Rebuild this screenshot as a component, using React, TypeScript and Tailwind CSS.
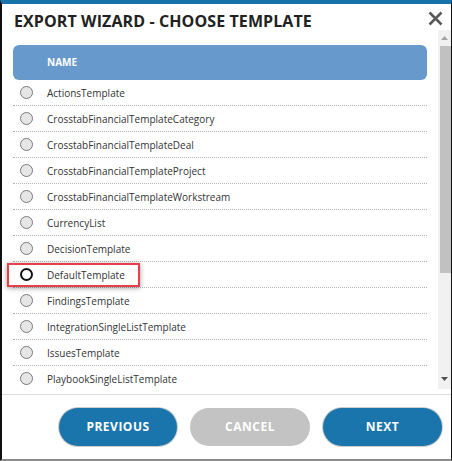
import { useState } from "react";

const templates = [
    "ActionsTemplate",
    "CrosstabFinancialTemplateCategory",
    "CrosstabFinancialTemplateDeal",
    "CrosstabFinancialTemplateProject",
    "CrosstabFinancialTemplateWorkstream",
    "CurrencyList",
    "DecisionTemplate",
    "DefaultTemplate",
    "FindingsTemplate",
    "IntegrationSingleListTemplate",
    "IssuesTemplate",
    "PlaybookSingleListTemplate",
];

export default function App() {
    const [selected, setSelected] = useState("DefaultTemplate");

    return (
        <div className="w-[452px] h-[461px] bg-white flex flex-col border-t-4 border-t-[#1873a9] border-l-2 border-l-[#111] border-r border-r-[#111] border-b-2 border-b-[#8c8c8c] font-['Open_Sans',sans-serif] overflow-hidden">
            {/* Title */}
            <div className="h-[26px] shrink-0 flex items-start justify-between pl-[12px] pr-[8px]">
                <h1 className="text-[16px] leading-[20px] pt-[7px] font-bold text-[#222] tracking-[0.1px]">
                    EXPORT WIZARD - CHOOSE TEMPLATE
                </h1>
                <button className="mt-[7px] text-[#595959]">
                    <svg width="15" height="15" viewBox="0 0 15 15">
                        <path d="M1.5 1.5 L13.5 13.5 M13.5 1.5 L1.5 13.5" stroke="currentColor" strokeWidth="2.6" />
                    </svg>
                </button>
            </div>

            {/* List + scrollbar */}
            <div className="h-[359px] shrink-0 flex">
                <div className="flex-1 overflow-hidden pl-[11px] pr-[11px] pt-[15px]">
                    <div className="h-[35px] rounded-[6px] bg-[#6799cc] flex items-center pl-[34px] text-white text-[10px] font-bold">
                        NAME
                    </div>
                    {templates.map((name) => {
                        const isSel = name === selected;
                        return (
                            <div
                                key={name}
                                onClick={() => setSelected(name)}
                                className="relative h-[26px] flex items-center border-b border-dotted border-[#b5b5b5] cursor-pointer"
                            >
                                <span
                                    className={
                                        isSel
                                            ? "ml-[7px] w-[13px] h-[13px] rounded-full border-2 border-[#111] bg-white shrink-0"
                                            : "ml-[7px] w-[13px] h-[13px] rounded-full border border-[#7a7a7a] bg-[#e6e6e6] shrink-0"
                                    }
                                />
                                <span className="ml-[14px] text-[10px] leading-[14px] pt-[1px] text-[#333]">{name}</span>
                                {isSel && (
                                    <span className="absolute left-[-6px] top-[1px] w-[133px] h-[24px] border-2 border-[#e5414b] shadow-[0_1px_5px_rgba(0,0,0,0.4)] pointer-events-none" />
                                )}
                            </div>
                        );
                    })}
                </div>

                {/* Scrollbar */}
                <div className="w-[13px] shrink-0 bg-[#f1f1f1] flex flex-col">
                    <div className="h-[16px] flex items-center justify-center">
                        <svg width="7" height="4" viewBox="0 0 7 4">
                            <polygon points="3.5,0 7,4 0,4" fill="#a3a3a3" />
                        </svg>
                    </div>
                    <div className="ml-[2px] h-[227px] bg-[#c1c1c1]" />
                    <div className="flex-1" />
                    <div className="h-[18px] flex items-start justify-center pt-[6px]">
                        <svg width="7" height="4" viewBox="0 0 7 4">
                            <polygon points="0,0 7,0 3.5,4" fill="#505050" />
                        </svg>
                    </div>
                </div>
            </div>

            <div className="h-[6px] shrink-0 border-b border-[#dedede]" />

            {/* Footer */}
            <div className="flex-1 flex items-center justify-end gap-[13px] pr-[9px]">
                <button className="w-[118px] h-[38px] rounded-full bg-[#1a75ad] text-white text-[12px] font-bold tracking-[0.5px] shadow-[0_0_0_1px_rgba(0,0,0,0.2)]">
                    PREVIOUS
                </button>
                <button className="w-[120px] h-[38px] rounded-full bg-[#c3c3c3] text-white text-[12px] font-bold tracking-[0.5px]">
                    CANCEL
                </button>
                <button className="w-[119px] h-[38px] rounded-full bg-[#1a75ad] text-white text-[12px] font-bold tracking-[0.5px] shadow-[0_0_0_1px_rgba(0,0,0,0.2)]">
                    NEXT
                </button>
            </div>
        </div>
    );
}
